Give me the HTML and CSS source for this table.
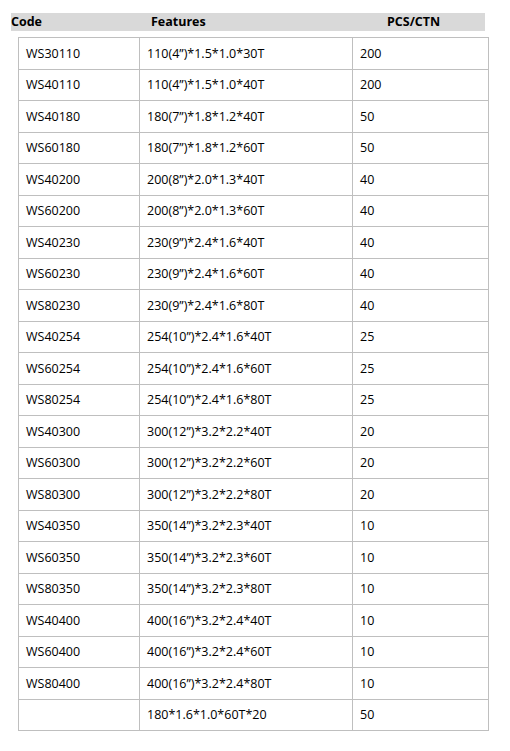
FILE: index.html
```html
<!DOCTYPE html>
<html>
<head>
<meta charset="utf-8">
<link rel="stylesheet" href="styles.css">
</head>
<body>
<div class="head">
  <span class="h1">Code</span>
  <span class="h2">Features</span>
  <span class="h3">PCS/CTN</span>
</div>
<table class="spec">
  <colgroup><col class="c1"><col class="c2"><col class="c3"></colgroup>
  <tr><td>WS30110</td><td>110(4”)*1.5*1.0*30T</td><td>200</td></tr>
  <tr><td>WS40110</td><td>110(4”)*1.5*1.0*40T</td><td>200</td></tr>
  <tr><td>WS40180</td><td>180(7”)*1.8*1.2*40T</td><td>50</td></tr>
  <tr><td>WS60180</td><td>180(7”)*1.8*1.2*60T</td><td>50</td></tr>
  <tr><td>WS40200</td><td>200(8”)*2.0*1.3*40T</td><td>40</td></tr>
  <tr><td>WS60200</td><td>200(8”)*2.0*1.3*60T</td><td>40</td></tr>
  <tr><td>WS40230</td><td>230(9”)*2.4*1.6*40T</td><td>40</td></tr>
  <tr><td>WS60230</td><td>230(9”)*2.4*1.6*60T</td><td>40</td></tr>
  <tr><td>WS80230</td><td>230(9”)*2.4*1.6*80T</td><td>40</td></tr>
  <tr><td>WS40254</td><td>254(10”)*2.4*1.6*40T</td><td>25</td></tr>
  <tr><td>WS60254</td><td>254(10”)*2.4*1.6*60T</td><td>25</td></tr>
  <tr><td>WS80254</td><td>254(10”)*2.4*1.6*80T</td><td>25</td></tr>
  <tr><td>WS40300</td><td>300(12”)*3.2*2.2*40T</td><td>20</td></tr>
  <tr><td>WS60300</td><td>300(12”)*3.2*2.2*60T</td><td>20</td></tr>
  <tr><td>WS80300</td><td>300(12”)*3.2*2.2*80T</td><td>20</td></tr>
  <tr><td>WS40350</td><td>350(14”)*3.2*2.3*40T</td><td>10</td></tr>
  <tr><td>WS60350</td><td>350(14”)*3.2*2.3*60T</td><td>10</td></tr>
  <tr><td>WS80350</td><td>350(14”)*3.2*2.3*80T</td><td>10</td></tr>
  <tr><td>WS40400</td><td>400(16”)*3.2*2.4*40T</td><td>10</td></tr>
  <tr><td>WS60400</td><td>400(16”)*3.2*2.4*60T</td><td>10</td></tr>
  <tr><td>WS80400</td><td>400(16”)*3.2*2.4*80T</td><td>10</td></tr>
  <tr><td></td><td>180*1.6*1.0*60T*20</td><td>50</td></tr>
</table>
</body>
</html>
```
FILE: styles.css
```css
html, body {
  margin: 0;
  padding: 0;
  background: #fff;
}
body {
  font-family: "Open Sans", "Liberation Sans", sans-serif;
  color: #000;
  padding-top: 13px;
}
.head {
  margin-left: 11px;
  width: 474px;
  height: 18px;
  background: #d9d9d9;
  display: grid;
  grid-template-columns: 140px 236px 1fr;
  align-items: center;
  font-weight: bold;
  font-size: 12.5px;
  line-height: 18px;
}
.spec {
  margin-left: 18px;
  margin-top: 6px;
  width: 470px;
  border-collapse: collapse;
  table-layout: fixed;
  font-size: 12.5px;
}
.c1 { width: 121px; }
.c2 { width: 213px; }
.c3 { width: 136px; }
.spec tr { height: 31.5px; }
.spec td {
  border: 1px solid #bfbfbf;
  padding: 0 0 0 7px;
  vertical-align: middle;
  white-space: nowrap;
}
```
